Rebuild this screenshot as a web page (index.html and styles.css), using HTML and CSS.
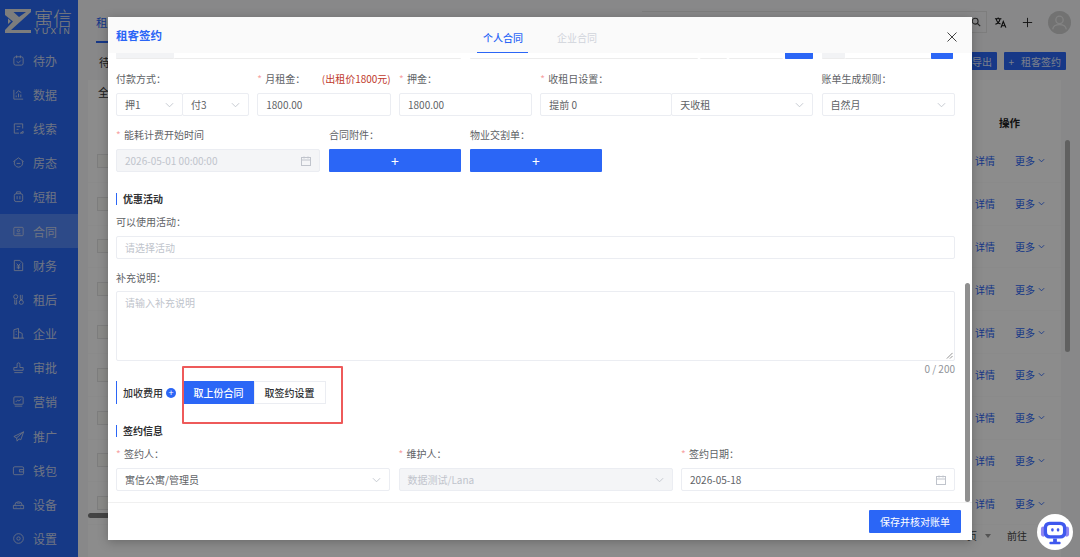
FILE: index.html
```html
<!DOCTYPE html>
<html lang="zh-CN">
<head>
<meta charset="utf-8">
<title>租客签约</title>
<link rel="stylesheet" href="styles.css">
</head>
<body>
<div class="app">
  <aside class="sidebar">
    <div class="logo">
      <svg class="logo-mark" viewBox="0 0 26 24" width="26" height="24"><path d="M0 0h26v3H8.500L14 8 21 3h5L6 21h20v3H0v-3l8-8.500L0 6zM3 9.500v5.500l3-2.800z" fill="currentColor" fill-rule="evenodd"/></svg>
      <div class="logo-text"><span class="logo-cn">寓信</span><span class="logo-en">YUXIN</span></div>
    </div>
    <nav class="nav">
      <a class="nav-item"><svg viewBox="0 0 14 14"><rect x="2" y="3" width="10" height="9" rx="2"/><path d="M5 1.500v3M9 1.500v3M5 8l2 1.500L9.500 7"/></svg>待办</a>
      <a class="nav-item"><svg viewBox="0 0 14 14"><path d="M2 2v10h10M4.500 10V8M7 10V6M9.500 10V7M4 6l3-3 3 2"/></svg>数据</a>
      <a class="nav-item"><svg viewBox="0 0 14 14"><path d="M11.500 7V2h-9v10h5M5 5h4M5 8h2M9 12l3-2v2z"/></svg>线索</a>
      <a class="nav-item"><svg viewBox="0 0 14 14"><path d="M1.500 6L7 2l5.500 4M3 5.500a4.500 4.500 0 1 0 8 0M5 8h4"/></svg>房态</a>
      <a class="nav-item"><svg viewBox="0 0 14 14"><rect x="2.500" y="4" width="9" height="8.500" rx="2"/><path d="M5 4V2h4v2M5.500 6.500v3.500M8.500 6.500v3.500"/></svg>短租</a>
      <a class="nav-item active"><svg viewBox="0 0 14 14"><rect x="2" y="2.500" width="10" height="9" rx="1"/><circle cx="7" cy="6" r="1.300"/><path d="M4.800 9.500h4.400"/></svg>合同</a>
      <a class="nav-item"><svg viewBox="0 0 14 14"><path d="M2.500 1.500h6l3 3v8h-9zM5 5l2 2 2-2M5 7.500h4M5 9.500h4M7 7v4"/></svg>财务</a>
      <a class="nav-item"><svg viewBox="0 0 14 14"><circle cx="4" cy="4" r="2.200"/><circle cx="10" cy="10" r="2.200"/><path d="M3 7v5h2V7M9 2v5h2V2"/></svg>租后</a>
      <a class="nav-item"><svg viewBox="0 0 14 14"><path d="M2 12V3l5-1.500V12zM7 5l4 2v5M1 12h12M4 5h1M4 8h1"/></svg>企业</a>
      <a class="nav-item"><svg viewBox="0 0 14 14"><path d="M5.500 7V3.500a1.500 1.500 0 0 1 3 0V7H12v3H2V7zM2.500 12.500h9"/></svg>审批</a>
      <a class="nav-item"><svg viewBox="0 0 14 14"><rect x="2" y="2" width="10" height="8" rx="1"/><path d="M4 7.500l2-2 1.500 1L10 4.500M3 12h8"/></svg>营销</a>
      <a class="nav-item"><svg viewBox="0 0 14 14"><path d="M12.500 2L2 7l3 1.500.5 3.500 2-2.500 2 1zM5 8.500L12.500 2"/></svg>推广</a>
      <a class="nav-item"><svg viewBox="0 0 14 14"><rect x="1.500" y="3" width="11" height="8.500" rx="1.500"/><path d="M12 6H8v2.500h4"/></svg>钱包</a>
      <a class="nav-item"><svg viewBox="0 0 14 14"><path d="M3 8a4 4 0 0 1 8 0M1.500 8h11v3.500h-11zM5 5.500h4M4 9.800h.800M9 9.800h.800"/></svg>设备</a>
      <a class="nav-item"><svg viewBox="0 0 14 14"><circle cx="7" cy="7" r="5.200"/><circle cx="7" cy="7" r="1.800"/></svg>设置</a>
    </nav>
  </aside>
  <main class="main">
    <header class="topbar">
      <div class="page-tab">租</div>
      <div class="top-tools">
        <div class="search">
          <svg class="search-icon" viewBox="0 0 12 12"><circle cx="5" cy="5" r="3.500"/><path d="M7.800 7.800L11 11"/></svg>
        </div>
        <svg class="tool" viewBox="0 0 14 14"><path d="M1 3h7M4.500 1.500V3M6.500 3C6 6 4 8 1.500 9M2.500 3.500C3 6 5 8 7 8.500M7.500 12.500L10 6l2.800 6.500M8.500 10.500h3.500"/></svg>
        <svg class="tool plus" viewBox="0 0 14 14"><path d="M7 2v10M2 7h10"/></svg>
        <div class="avatar"><svg viewBox="0 0 22 22"><circle cx="11" cy="8.500" r="3.500"/><path d="M4.500 17.500c.5-3.500 3.500-4.500 6.500-4.500s6 1 6.500 4.500"/></svg></div>
      </div>
    </header>
    <div class="toolbar">
      <span class="toolbar-title">待</span>
      <div class="toolbar-actions">
        <button class="ghost-btn">导出</button>
        <button class="ghost-btn wide"><span class="btn-plus">+</span>租客签约</button>
      </div>
    </div>
    <section class="card">
      <div class="card-tab">全</div>
      <div class="table-head"><span class="head-op">操作</span></div>
      <div class="table-row"><i class="check"></i><a class="link">详情</a><a class="link more">更多<svg viewBox="0 0 8 8"><path d="M1 2.500L4 5.500 7 2.500"/></svg></a></div>
      <div class="table-row"><i class="check"></i><a class="link">详情</a><a class="link more">更多<svg viewBox="0 0 8 8"><path d="M1 2.500L4 5.500 7 2.500"/></svg></a></div>
      <div class="table-row"><i class="check"></i><a class="link">详情</a><a class="link more">更多<svg viewBox="0 0 8 8"><path d="M1 2.500L4 5.500 7 2.500"/></svg></a></div>
      <div class="table-row"><i class="check"></i><a class="link">详情</a><a class="link more">更多<svg viewBox="0 0 8 8"><path d="M1 2.500L4 5.500 7 2.500"/></svg></a></div>
      <div class="table-row"><i class="check"></i><a class="link">详情</a><a class="link more">更多<svg viewBox="0 0 8 8"><path d="M1 2.500L4 5.500 7 2.500"/></svg></a></div>
      <div class="table-row"><i class="check"></i><a class="link">详情</a><a class="link more">更多<svg viewBox="0 0 8 8"><path d="M1 2.500L4 5.500 7 2.500"/></svg></a></div>
      <div class="table-row"><i class="check"></i><a class="link">详情</a><a class="link more">更多<svg viewBox="0 0 8 8"><path d="M1 2.500L4 5.500 7 2.500"/></svg></a></div>
      <div class="table-row"><i class="check"></i><a class="link">详情</a><a class="link more">更多<svg viewBox="0 0 8 8"><path d="M1 2.500L4 5.500 7 2.500"/></svg></a></div>
      <div class="table-row"><i class="check"></i><a class="link">详情</a><a class="link more">更多<svg viewBox="0 0 8 8"><path d="M1 2.500L4 5.500 7 2.500"/></svg></a></div>
      <div class="pager"><span>页</span><i class="caret"></i><span class="goto">前往</span></div>
      <div class="hscroll"></div>
      <div class="vscroll"></div>
    </section>
  </main>
</div>

<div class="mask"></div>

<div class="modal">
  <header class="modal-head">
    <div class="modal-title">租客签约</div>
    <div class="modal-tabs">
      <span class="modal-tab current">个人合同</span>
      <span class="modal-tab">企业合同</span>
    </div>
    <svg class="close" viewBox="0 0 10 10"><path d="M.5.500l9 9M9.500.500l-9 9"/></svg>
  </header>
  <div class="modal-body">
    <div class="clip-row">
      <i class="clip grey c58"></i><i class="clip c287"></i><i class="clip c228 gap9"></i><i class="clip c27 gap2"></i><i class="clip c54 gap2"></i><i class="clip blue c28 gap2"></i><i class="clip grey c23 gap9"></i><i class="clip c86"></i><i class="clip blue c22"></i>
    </div>

    <div class="grid-five">
      <div class="field">
        <label class="label">付款方式：</label>
        <div class="joined">
          <div class="input half">押1<svg class="chev" viewBox="0 0 10 6"><path d="M1 1l4 4 4-4"/></svg></div>
          <div class="input half">付3<svg class="chev" viewBox="0 0 10 6"><path d="M1 1l4 4 4-4"/></svg></div>
        </div>
      </div>
      <div class="field">
        <label class="label"><b class="req">*</b>月租金：<em class="hint">(出租价1800元)</em></label>
        <div class="input">1800.00</div>
      </div>
      <div class="field">
        <label class="label"><b class="req">*</b>押金：</label>
        <div class="input">1800.00</div>
      </div>
      <div class="field">
        <label class="label"><b class="req">*</b>收租日设置：</label>
        <div class="joined">
          <div class="input rent-pre">提前 0</div>
          <div class="input half">天收租<svg class="chev" viewBox="0 0 10 6"><path d="M1 1l4 4 4-4"/></svg></div>
        </div>
      </div>
      <div class="field">
        <label class="label">账单生成规则：</label>
        <div class="input">自然月<svg class="chev" viewBox="0 0 10 6"><path d="M1 1l4 4 4-4"/></svg></div>
      </div>
    </div>

    <div class="grid-three">
      <div class="field">
        <label class="label"><b class="req">*</b>能耗计费开始时间</label>
        <div class="input disabled">2026-05-01 00:00:00<svg class="cal" viewBox="0 0 10 10"><rect x=".5" y="1.500" width="9" height="8"/><path d="M.5 4h9M3 .5v2M7 .5v2"/></svg></div>
      </div>
      <div class="field">
        <label class="label">合同附件：</label>
        <button class="upload">+</button>
      </div>
      <div class="field">
        <label class="label">物业交割单：</label>
        <button class="upload">+</button>
      </div>
    </div>

    <h3 class="section promo">优惠活动</h3>
    <div class="field wide-gap">
      <label class="label">可以使用活动：</label>
      <div class="input placeholder">请选择活动</div>
    </div>
    <div class="field note">
      <label class="label tight">补充说明：</label>
      <div class="textarea">请输入补充说明
        <svg class="resize" viewBox="0 0 8 8"><path d="M7.500 1L1 7.500M7.500 4.500L4.500 7.500"/></svg>
      </div>
    </div>
    <div class="counter">0 / 200</div>

    <div class="fee-row">
      <span class="fee-title">加收费用</span>
      <i class="fee-add">+</i>
      <button class="seg on">取上份合同</button>
      <button class="seg">取签约设置</button>
    </div>

    <h3 class="section sign">签约信息</h3>
    <div class="grid-sign">
      <div class="field">
        <label class="label"><b class="req">*</b>签约人：</label>
        <div class="input">寓信公寓/管理员<svg class="chev" viewBox="0 0 10 6"><path d="M1 1l4 4 4-4"/></svg></div>
      </div>
      <div class="field">
        <label class="label"><b class="req">*</b>维护人：</label>
        <div class="input disabled">数据测试/Lana<svg class="chev" viewBox="0 0 10 6"><path d="M1 1l4 4 4-4"/></svg></div>
      </div>
      <div class="field">
        <label class="label"><b class="req">*</b>签约日期：</label>
        <div class="input">2026-05-18<svg class="cal" viewBox="0 0 10 10"><rect x=".5" y="1.500" width="9" height="8"/><path d="M.5 4h9M3 .5v2M7 .5v2"/></svg></div>
      </div>
    </div>
    <div class="annotation"></div>
    <div class="modal-scroll"></div>
  </div>
  <footer class="modal-foot">
    <button class="primary">保存并核对账单</button>
  </footer>
</div>

<div class="robot">
  <svg viewBox="0 0 32 32" width="30" height="30">
    <rect x="1" y="10" width="5" height="11" rx="2.500" fill="#8f86f2"/>
    <rect x="26" y="10" width="5" height="11" rx="2.500" fill="#8f86f2"/>
    <rect x="4" y="5" width="24" height="18" rx="6" fill="#3f58ee"/>
    <rect x="7.500" y="8.500" width="17" height="11" rx="3.500" fill="#fff"/>
    <rect x="12" y="12" width="2.500" height="3.500" rx="1" fill="#3f58ee"/>
    <rect x="18" y="12" width="2.500" height="3.500" rx="1" fill="#3f58ee"/>
    <rect x="10" y="26.500" width="12" height="2.500" rx="1" fill="#3f58ee"/>
    <rect x="14" y="23" width="4" height="4" fill="#3f58ee"/>
  </svg>
</div>
</body>
</html>
```
FILE: styles.css
```css
* { box-sizing: border-box; }
html, body { margin: 0; height: 100%; overflow: hidden; }
body {
  font-family: "Noto Sans CJK SC", "Noto Sans", sans-serif;
  font-size: 10px;
  color: #606266;
  background: #f7f8fa;
}
button { font-family: inherit; border: 0; padding: 0; }
h3 { margin: 0; }
em, i { font-style: normal; }

/* page behind the dialog */
.app { display: flex; height: 557px; }
.sidebar { width: 78px; flex: none; background: #2869f5; color: #fff; }
.logo { height: 43px; display: flex; align-items: flex-start; gap: 3px; padding: 8px 0 0 5px; color: #e4e4e4; }
.logo-mark { margin-top: 1px; flex: none; }
.logo-text { display: flex; flex-direction: column; align-items: center; }
.logo-cn { font-size: 19px; line-height: 19px; font-weight: 300; white-space: nowrap; }
.logo-en { font-size: 8.500px; line-height: 8px; letter-spacing: 2.400px; font-family: "Liberation Sans", sans-serif; white-space: nowrap; }
.nav { display: flex; flex-direction: column; }
.nav-item { height: 34.2px; display: flex; align-items: center; gap: 8px; padding-left: 12px; font-size: 12px; color: #c9d3ee; }
.nav-item.active { background: rgba(255,255,255,.2); }
.nav-item svg { width: 13px; height: 13px; fill: none; stroke: currentColor; stroke-width: .9; }

.main { flex: 1; min-width: 0; display: flex; flex-direction: column; padding-left: 10px; }
.topbar { height: 44px; display: flex; justify-content: space-between; align-items: flex-start; }
.page-tab { margin-left: 8px; width: 60px; height: 26px; margin-top: 17px; line-height: 10px; font-size: 11.500px; color: #2b66f6; border-bottom: 2px solid #2b66f6; }
.top-tools { display: flex; align-items: center; height: 44px; }
.search { width: 345px; height: 22px; margin-top: -1px; border: 1px solid #e4e4e4; display: flex; justify-content: flex-end; align-items: center; padding-right: 5px; margin-right: 7px; border-left: 0; }
.search-icon { width: 10px; height: 10px; fill: none; stroke: #444; stroke-width: 1.300; }
.tool { width: 13px; height: 13px; fill: none; stroke: #111; stroke-width: 1.200; margin-right: 14px; }
.tool.plus { stroke: #222; stroke-width: 1; }
.avatar { width: 23px; height: 23px; border-radius: 50%; background: #cfcfcf; margin-right: 9px; }
.avatar svg { width: 23px; height: 23px; fill: none; stroke: #efefef; stroke-width: 1.200; display: block; }

.toolbar { height: 36px; display: flex; justify-content: space-between; align-items: center; padding: 0 14px 0 11px; }
.toolbar-title { font-size: 11px; color: #333; }
.toolbar-actions { display: flex; gap: 7px; margin-top: -2px; }
.ghost-btn { height: 18px; width: 57px; background: #2b66f6; color: #dfe7ff; font-size: 10px; border-radius: 1px; text-align: right; padding-right: 5px; }
.ghost-btn.wide { width: 62px; }
.btn-plus { margin-right: 7px; }

.card { flex: 1; position: relative; margin-right: 19px; background: #fff; padding-top: 4px; }
.card-tab { padding-left: 10px; height: 22px; font-size: 11px; color: #333; }
.table-head { height: 34px; padding-top: 2px; display: flex; justify-content: flex-end; align-items: center; padding-right: 41px; padding-bottom: 4px; }
.head-op { font-weight: 700; font-size: 10.500px; color: #222; }
.table-row { height: 42.8px; display: flex; align-items: center; padding-left: 9px; border-bottom: 1px solid #fbfbfb; }
.check { width: 12px; height: 14px; border: 1px solid #e6e6e6; background: #fcfcf8; margin-right: auto; }
.link { color: #2b66f6; font-size: 10px; margin-right: 20px; width: 20px; white-space: nowrap; }
.link.more { margin-right: 15px; width: 31px; display: flex; align-items: center; gap: 3px; }
.more svg { width: 7px; height: 7px; fill: none; stroke: currentColor; stroke-width: 1; flex: none; }
.pager { display: flex; justify-content: flex-end; align-items: center; gap: 8px; height: 20px; padding-right: 8px; font-size: 10px; color: #444; }
.goto { margin-left: 8px; width: 46px; }
.caret { border: 3px solid transparent; border-top: 4px solid #999; margin-top: 4px; }
.hscroll { position: absolute; left: 0; top: 433px; width: 200px; height: 5px; border-radius: 3px; background: #7d7d7d; }
.vscroll { position: absolute; right: -9px; top: 60px; width: 5px; height: 212px; border-radius: 3px; background: #b0b0b0; }

.mask { position: absolute; inset: 0; background: rgba(0,0,0,.45); }

/* dialog */
.modal { position: absolute; left: 108px; top: 17px; width: 864px; height: 523px; display: flex; flex-direction: column; background: #fff; box-shadow: 0 2px 10px rgba(0,0,0,.25); }
.modal-head { flex: none; height: 36px; position: relative; background: #fafafa; display: flex; align-items: center; padding: 0 8px; }
.modal-title { color: #2b66f6; font-size: 11.500px; font-weight: 700; }
.modal-tabs { position: absolute; left: 369px; top: 0; height: 36px; display: flex; }
.modal-tab { width: 80px; padding-left: 6px; line-height: 41px; font-size: 10px; color: #d0d3da; }
.modal-tab.current { width: 51px; margin-right: 23px; color: #2b66f6; border-bottom: 1.500px solid #2b66f6; font-weight: 500; }
.close { position: absolute; left: 839px; top: 15px; width: 10px; height: 10px; fill: none; stroke: #444; stroke-width: 1; }

.modal-body { flex: 1; min-height: 0; position: relative; padding: 0 17px 0 8px; }
.clip-row { display: flex; height: 6px; }
.clip { height: 6px; display: block; border-bottom: 1px solid #ececec; border-radius: 0 0 1px 1px; }
.clip.grey { background: #f2f3f5; }
.clip.blue { background: #2b66f6; border-color: #2b66f6; }
.c58 { width: 58px; } .c287 { width: 287px; } .c228 { width: 228px; } .c27 { width: 27px; }
.c54 { width: 54px; } .c28 { width: 28px; } .c23 { width: 23px; } .c86 { width: 86px; } .c22 { width: 22px; }
.gap9 { margin-left: 9px; } .gap2 { margin-left: 2px; }

.field { min-width: 0; }
.label { display: flex; height: 14px; line-height: 14px; margin-bottom: 7px; color: #606266; white-space: nowrap; }
.label.tight { margin-bottom: 6px; }
.req { width: 8px; color: #f7a3a3; font-weight: 400; }
.hint { margin-left: auto; color: #c0392b; }
.input { height: 23px; line-height: 22px; border: 1px solid #ebedf2; border-radius: 2px; padding: 0 8px; background: #fff; display: flex; align-items: center; justify-content: space-between; color: #606266; white-space: nowrap; }
.input.disabled { background: #f4f5f7; color: #c0c4cc; }
.input.placeholder { color: #c0c4cc; }
.joined { display: flex; }
.joined .half { flex: 1; min-width: 0; }
.joined .half + .half, .rent-pre + .half { margin-left: -1px; }
.rent-pre { width: 132px; flex: none; }
.chev { width: 9px; height: 6px; fill: none; stroke: #c0c4cc; stroke-width: 1; flex: none; }
.cal { width: 10px; height: 10px; fill: none; stroke: #c0c4cc; stroke-width: 1; flex: none; }

.grid-five { display: grid; grid-template-columns: 133px 133.5px 133px 273px 133px; column-gap: 8.250px; margin-top: 13px; }
.grid-three { display: grid; grid-template-columns: 204px 132px 132px; column-gap: 9px; margin-top: 12px; }
.grid-sign { display: grid; grid-template-columns: repeat(3, 1fr); column-gap: 8.500px; margin-top: 10px; }
.upload { display: block; width: 100%; height: 23px; background: #2b66f6; color: #fff; font-size: 14px; line-height: 20px; border-radius: 1px; }

.section { height: 12px; line-height: 12px; border-left: 1.500px solid #2b66f6; padding-left: 6px; font-size: 10px; font-weight: 700; color: #303133; }
.section.promo { margin-top: 21px; }
.section.sign { margin-top: 21px; }
.wide-gap { margin-top: 10px; }
.note { margin-top: 12px; }
.textarea { position: relative; height: 70px; border: 1px solid #ebedf2; border-radius: 2px; padding: 3px 8px; color: #c0c4cc; }
.resize { position: absolute; right: 1px; bottom: 1px; width: 7px; height: 7px; fill: none; stroke: #666; stroke-width: .8; }
.counter { height: 12px; line-height: 14px; text-align: right; color: #909399; margin-top: 1px; }

.fee-row { margin-top: 7px; height: 23px; display: flex; align-items: center; border-left: 1.500px solid #2b66f6; padding-left: 6px; }
.fee-title { font-weight: 500; color: #303133; }
.fee-add { width: 10px; height: 10px; margin-left: 3px; margin-right: 7.500px; border-radius: 50%; background: #2b66f6; color: #fff; font-size: 9px; line-height: 9px; text-align: center; }
.seg { width: 72px; height: 23px; background: #fff; border: 1px solid #ebedf2; color: #303133; font-size: 10px; font-weight: 500; }
.seg.on { width: 70px; background: #2b66f6; border-color: #2b66f6; color: #fff; }

.annotation { position: absolute; left: 74px; top: 313px; width: 161px; height: 58px; border: 2.500px solid #ee5a5a; border-radius: 1px; }
.modal-scroll { position: absolute; right: 2px; top: 230px; width: 5px; height: 219px; border-radius: 3px; background: #8f8f8f; }

.modal-foot { flex: none; height: 38px; border-top: 1px solid #f0f0f0; display: flex; justify-content: flex-end; align-items: flex-start; padding: 7px 11px 0 0; }
.primary { width: 92px; height: 23px; background: #2b66f6; color: #fff; font-size: 10px; border-radius: 1px; }

.robot { position: absolute; left: 1037px; top: 514px; width: 36px; height: 36px; border-radius: 50%; background: #fff; display: flex; align-items: center; justify-content: center; }
```
